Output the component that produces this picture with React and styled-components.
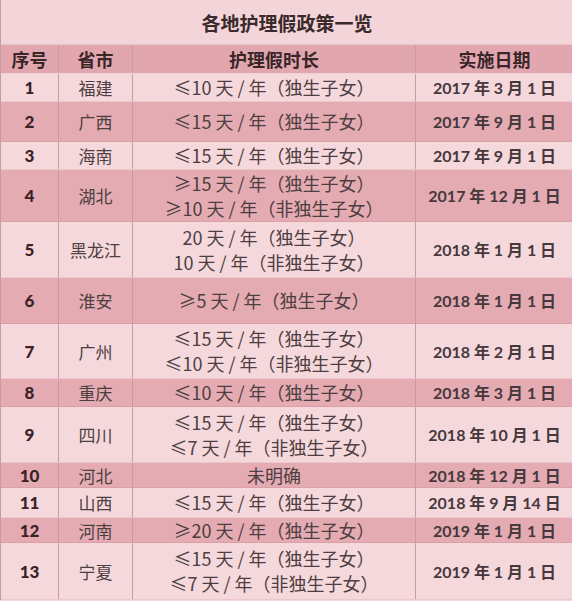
import styled, { createGlobalStyle } from 'styled-components';

const GlobalStyle = createGlobalStyle`
  body {
    margin: 0;
    background: #f4d6da;
    font-family: Lato, "Noto Sans CJK SC", sans-serif;
  }
`;

const COLS = '58px 74px 283px 157px';

const Sheet = styled.div`
  width: 572px;
  display: flex;
  flex-direction: column;
  color: #3e2f31;
  border-left: 1px solid #c99aa0;
`;

const Title = styled.div`
  height: 45px;
  display: flex;
  align-items: center;
  justify-content: center;
  background: #f3d4d8;
  font-family: "Noto Sans CJK SC", sans-serif;
  font-weight: 700;
  font-size: 19px;
  color: #3a2a2c;
  border-bottom: 1px solid #e9c5ca;
  box-sizing: border-box;
`;

const Row = styled.div`
  display: grid;
  grid-template-columns: ${COLS};
  height: ${p => p.$h}px;
  background: ${p => (p.$dark ? '#e4abb2' : '#f5d8dc')};
  border-bottom: 1px solid ${p => (p.$dark ? '#d9a0a8' : '#ecc8cc')};
  box-sizing: border-box;
`;

const HeadRow = styled(Row)`
  background: #e2a6ae;
  border-bottom: 1px solid #f1d2d6;
`;

const Cell = styled.div`
  display: flex;
  flex-direction: column;
  align-items: center;
  justify-content: center;
  border-right: 1px solid #c99aa0;
  line-height: 25px;
  white-space: nowrap;
  &:last-child {
    border-right: none;
  }
`;

const HeadCell = styled(Cell)`
  font-family: "Noto Sans CJK SC", sans-serif;
  font-weight: 700;
  font-size: 18px;
  color: #3a2629;
`;

const NumCell = styled(Cell)`
  font-family: Lato, "Noto Sans CJK SC", sans-serif;
  font-weight: 900;
  font-size: 17px;
  color: #3a2226;
`;

const TextCell = styled(Cell)`
  font-family: "Noto Sans CJK SC", sans-serif;
  font-size: ${p => p.$size || 17}px;
  color: #4d3e41;
`;

const DateCell = styled(Cell)`
  font-family: Lato, "Noto Sans CJK SC", sans-serif;
  font-weight: 700;
  font-size: 16px;
  color: #46383c;
`;

const rows = [
  { n: 1, p: '福建', lines: ['≤10 天 / 年（独生子女）'], d: '2017 年 3 月 1 日', h: 28 },
  { n: 2, p: '广西', lines: ['≤15 天 / 年（独生子女）'], d: '2017 年 9 月 1 日', h: 40 },
  { n: 3, p: '海南', lines: ['≤15 天 / 年（独生子女）'], d: '2017 年 9 月 1 日', h: 28 },
  { n: 4, p: '湖北', lines: ['≥15 天 / 年（独生子女）', '≥10 天 / 年（非独生子女）'], d: '2017 年 12 月 1 日', h: 52 },
  { n: 5, p: '黑龙江', lines: ['20 天 / 年（独生子女）', '10 天 / 年（非独生子女）'], d: '2018 年 1 月 1 日', h: 56 },
  { n: 6, p: '淮安', lines: ['≥5 天 / 年（独生子女）'], d: '2018 年 1 月 1 日', h: 46 },
  { n: 7, p: '广州', lines: ['≤15 天 / 年（独生子女）', '≤10 天 / 年（非独生子女）'], d: '2018 年 2 月 1 日', h: 55 },
  { n: 8, p: '重庆', lines: ['≤10 天 / 年（独生子女）'], d: '2018 年 3 月 1 日', h: 28 },
  { n: 9, p: '四川', lines: ['≤15 天 / 年（独生子女）', '≤7 天 / 年（非独生子女）'], d: '2018 年 10 月 1 日', h: 56 },
  { n: 10, p: '河北', lines: ['未明确'], d: '2018 年 12 月 1 日', h: 25 },
  { n: 11, p: '山西', lines: ['≤15 天 / 年（独生子女）'], d: '2018 年 9 月 14 日', h: 30 },
  { n: 12, p: '河南', lines: ['≥20 天 / 年（独生子女）'], d: '2019 年 1 月 1 日', h: 25 },
  { n: 13, p: '宁夏', lines: ['≤15 天 / 年（独生子女）', '≤7 天 / 年（非独生子女）'], d: '2019 年 1 月 1 日', h: 57 },
];

export default function App() {
  return (
    <>
      <GlobalStyle />
      <Sheet>
        <Title>各地护理假政策一览</Title>
        <HeadRow $h={29}>
          <HeadCell>序号</HeadCell>
          <HeadCell>省市</HeadCell>
          <HeadCell>护理假时长</HeadCell>
          <HeadCell>实施日期</HeadCell>
        </HeadRow>
        {rows.map(r => (
          <Row key={r.n} $h={r.h} $dark={r.n % 2 === 0}>
            <NumCell>{r.n}</NumCell>
            <TextCell>{r.p}</TextCell>
            <TextCell $size={18}>
              {r.lines.map(l => (
                <span key={l}>{l}</span>
              ))}
            </TextCell>
            <DateCell>{r.d}</DateCell>
          </Row>
        ))}
      </Sheet>
    </>
  );
}
